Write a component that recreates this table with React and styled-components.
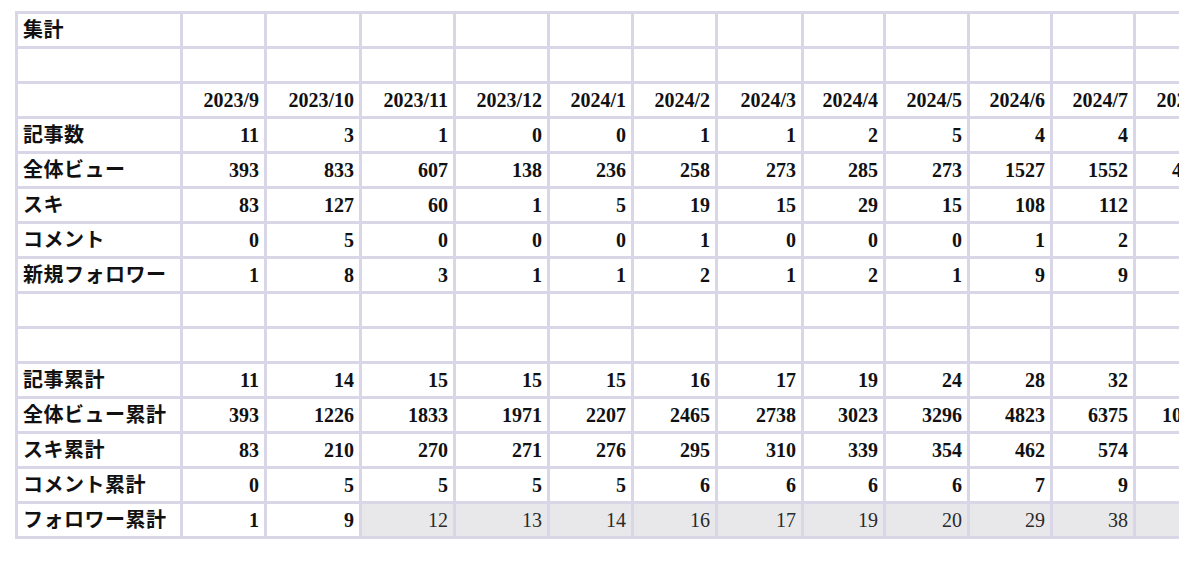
import React from "react";
import styled, { createGlobalStyle } from "styled-components";

const GlobalStyle = createGlobalStyle`
  html, body {
    margin: 0;
    padding: 0;
    background: #ffffff;
  }
  body {
    font-family: "Liberation Serif", "Noto Sans CJK JP", serif;
    color: #111111;
  }
`;

const months = [
  "2023/9", "2023/10", "2023/11", "2023/12", "2024/1", "2024/2",
  "2024/3", "2024/4", "2024/5", "2024/6", "2024/7", "2024/8",
];

const colWidths = [165, 84, 95, 94, 94, 84, 84, 86, 82, 84, 83, 83, 84];

const monthly = [
  { label: "記事数", values: [11, 3, 1, 0, 0, 1, 1, 2, 5, 4, 4, 3] },
  { label: "全体ビュー", values: [393, 833, 607, 138, 236, 258, 273, 285, 273, 1527, 1552, 4021] },
  { label: "スキ", values: [83, 127, 60, 1, 5, 19, 15, 29, 15, 108, 112, 96] },
  { label: "コメント", values: [0, 5, 0, 0, 0, 1, 0, 0, 0, 1, 2, 0] },
  { label: "新規フォロワー", values: [1, 8, 3, 1, 1, 2, 1, 2, 1, 9, 9, 5] },
];

const totals = [
  { label: "記事累計", values: [11, 14, 15, 15, 15, 16, 17, 19, 24, 28, 32, 35] },
  { label: "全体ビュー累計", values: [393, 1226, 1833, 1971, 2207, 2465, 2738, 3023, 3296, 4823, 6375, 10396] },
  { label: "スキ累計", values: [83, 210, 270, 271, 276, 295, 310, 339, 354, 462, 574, 670] },
  { label: "コメント累計", values: [0, 5, 5, 5, 5, 6, 6, 6, 6, 7, 9, 9] },
  // from 2023/11 on, this row is shaded and not bold
  { label: "フォロワー累計", values: [1, 9, 12, 13, 14, 16, 17, 19, 20, 29, 38, 43], shadeFrom: 2 },
];

const App = () => {
  const emptyRow = (key, label = "") => (
    <Row key={key}>
      <LabelCell>{label}</LabelCell>
      {months.map((m) => (
        <Cell key={m} />
      ))}
    </Row>
  );

  const dataRow = ({ label, values, shadeFrom }) => (
    <Row key={label}>
      <LabelCell>{label}</LabelCell>
      {values.map((v, i) => (
        <Cell key={i} $shaded={shadeFrom !== undefined && i >= shadeFrom}>
          {v}
        </Cell>
      ))}
    </Row>
  );

  return (
    <>
      <GlobalStyle />
      <Page>
        <Sheet>
          <colgroup>
            {colWidths.map((w, i) => (
              <col key={i} style={{ width: w }} />
            ))}
          </colgroup>
          <tbody>
            {emptyRow("title", "集計")}
            {emptyRow("gap1")}
            <Row>
              <LabelCell />
              {months.map((m) => (
                <Cell key={m}>{m}</Cell>
              ))}
            </Row>
            {monthly.map(dataRow)}
            {emptyRow("gap2")}
            {emptyRow("gap3")}
            {totals.map(dataRow)}
          </tbody>
        </Sheet>
      </Page>
    </>
  );
};

const Page = styled.div`
  width: 1179px;
  height: 565px;
  overflow: hidden;
  padding: 11px 0 0 15px;
  box-sizing: border-box;
`;

const Sheet = styled.table`
  border-collapse: collapse;
  table-layout: fixed;
  width: ${colWidths.reduce((a, b) => a + b, 0)}px;
  font-size: 20px;
  font-weight: 700;
`;

const Row = styled.tr`
  height: 35px;
`;

const Cell = styled.td`
  border: 3px solid #d9d7e7;
  padding: 0 5px 0 4px;
  text-align: right;
  white-space: nowrap;
  overflow: hidden;
  line-height: 1;
  vertical-align: middle;
  background: ${({ $shaded }) => ($shaded ? "#e8e8ea" : "#ffffff")};
  font-weight: ${({ $shaded }) => ($shaded ? 400 : 700)};
  color: ${({ $shaded }) => ($shaded ? "#2a2a2a" : "#111111")};
`;

const LabelCell = styled(Cell)`
  text-align: left;
  padding: 0 4px 0 5px;
  font-weight: 600;
  letter-spacing: 0.5px;
`;

export default App;
